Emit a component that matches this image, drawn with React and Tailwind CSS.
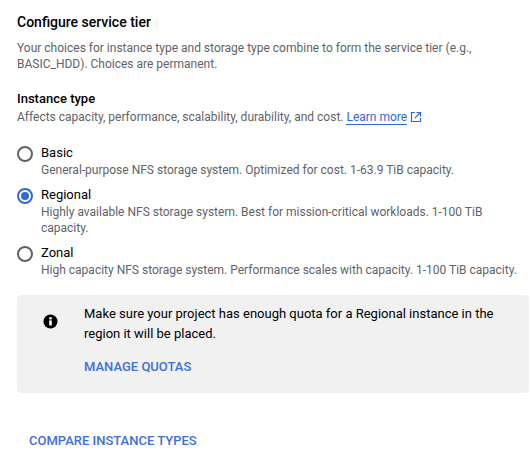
import { useState } from 'react'

const TIERS = [
  { id: 'basic', label: 'Basic', text: 'General-purpose NFS storage system. Optimized for cost. 1-63.9 TiB capacity.' },
  { id: 'regional', label: 'Regional', text: 'Highly available NFS storage system. Best for mission-critical workloads. 1-100 TiB capacity.' },
  { id: 'zonal', label: 'Zonal', text: 'High capacity NFS storage system. Performance scales with capacity. 1-100 TiB capacity.' },
]

function Radio({ checked }) {
  return (
    <span className={`mt-[2px] flex h-[16px] w-[16px] shrink-0 items-center justify-center rounded-full border-2 ${checked ? 'border-[#3367d6]' : 'border-[#5f6368]'}`}>
      {checked && <span className="h-[8px] w-[8px] rounded-full bg-[#3367d6]" />}
    </span>
  )
}

export default function App() {
  const [tier, setTier] = useState('regional')

  return (
    <div className="h-[468px] w-[531px] overflow-hidden bg-white pl-[17px] pr-[2px] pt-[12px] font-['Roboto',sans-serif]">
      <h2 className="text-[14px] font-medium leading-[20px] text-[#000]">Configure service tier</h2>
      <p className="mt-[8px] text-[12px] leading-[16px] text-[#5f6368]">
        Your choices for instance type and storage type combine to form the service tier (e.g., BASIC_HDD). Choices are permanent.
      </p>

      <div className="mt-[18px] text-[13px] font-medium leading-[18px] text-[#000]">Instance type</div>
      <div className="mt-[1px] text-[12px] leading-[16px] text-[#5f6368]">
        Affects capacity, performance, scalability, durability, and cost.{' '}
        <a className="border-b border-[#3367d6] text-[#3367d6]">Learn more</a>
        <svg className="ml-[3px] inline-block align-[-2px]" width="12" height="12" viewBox="0 0 12 12" fill="none" stroke="#3367d6" strokeWidth="1.2">
          <path d="M5 1.5H1.5v9h9V7M6.5 1.5h4V5.5M10.5 1.5 4.8 7.2" />
        </svg>
      </div>

      <div className="mt-[19px] flex flex-col gap-[8px]">
        {TIERS.map(t => (
          <label key={t.id} className="flex cursor-pointer gap-[8px]" onClick={() => setTier(t.id)}>
            <Radio checked={tier === t.id} />
            <div>
              <div className="text-[13px] leading-[18px] text-[#000]">{t.label}</div>
              <div className="text-[12px] leading-[16px] text-[#5f6368]">{t.text}</div>
            </div>
          </label>
        ))}
      </div>

      <div className="mt-[17px] flex h-[98px] rounded-[4px] bg-[#f1f1f1] pt-[9px]">
        <svg className="ml-[26px] mt-[10px] shrink-0" width="15" height="15" viewBox="0 0 15 15">
          <circle cx="7.5" cy="7.5" r="7" fill="#000" />
          <rect x="6.2" y="6.4" width="2.6" height="5" fill="#fff" />
          <rect x="6.2" y="3.3" width="2.6" height="2.1" fill="#fff" />
        </svg>
        <div className="ml-[26px] pr-[20px]">
          <p className="text-[13px] leading-[20px] text-[#000]">
            Make sure your project has enough quota for a Regional instance in the region it will be placed.
          </p>
          <a className="mt-[15px] block text-[13px] font-medium leading-[16px] text-[#4170d8]">MANAGE QUOTAS</a>
        </div>
      </div>

      <a className="ml-[12px] mt-[40px] block text-[13px] font-medium leading-[16px] text-[#4170d8]">COMPARE INSTANCE TYPES</a>
    </div>
  )
}
